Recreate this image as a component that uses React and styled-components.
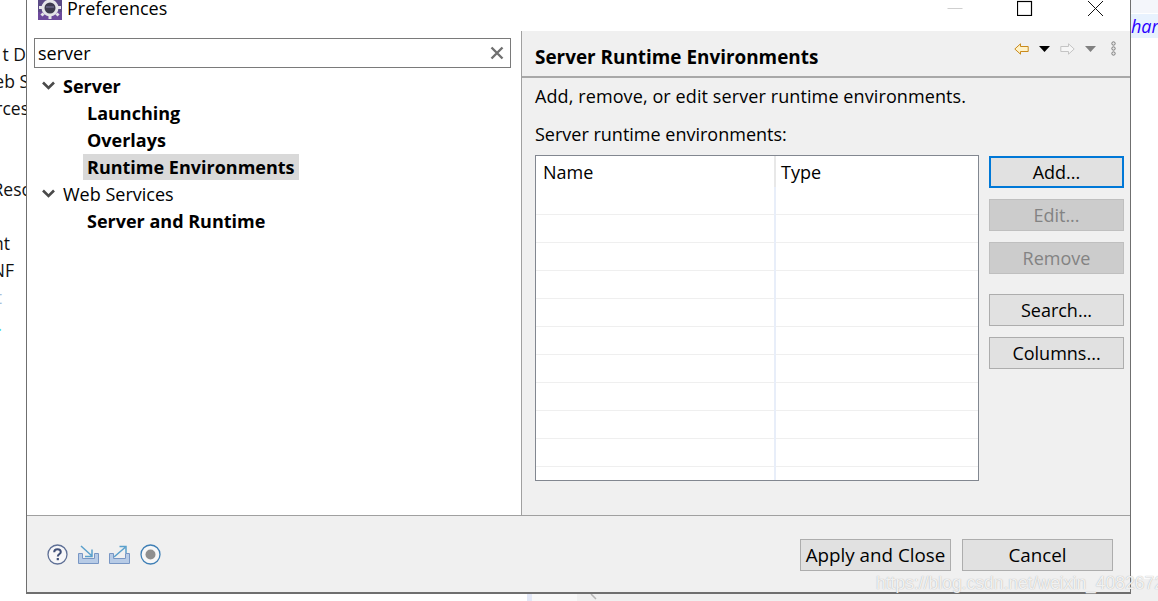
import React from "react";
import styled, { createGlobalStyle } from "styled-components";

const FONT = `"Open Sans", "Noto Sans", sans-serif`;

const GlobalStyle = createGlobalStyle`
  html, body { margin: 0; padding: 0; background: #fff; }
  body { font-family: ${FONT}; font-size: 18px; color: #000; overflow: hidden; }
`;

const Page = styled.div`
  position: relative;
  width: 1158px;
  height: 601px;
  overflow: hidden;
  display: flex;
  flex-direction: column;
`;

const Top = styled.div`
  display: flex;
  height: 594px;
`;

/* what is left visible of the IDE behind the dialog */
const LeftPeek = styled.div`
  width: 26px;
  padding-top: 41px;
  overflow: hidden;
  flex: none;
`;

const PeekLine = styled.div`
  height: 27px;
  line-height: 27px;
  display: flex;
  justify-content: flex-end;
  white-space: nowrap;
  font-size: 17.5px;
  color: ${(p) => p.$color || "#111"};
  margin-right: ${(p) => p.$cut || 0}px;
`;

const RightPeek = styled.div`
  width: 27px;
  flex: none;
  display: flex;
  flex-direction: column;
`;

const PeekTint = styled.div`
  height: 13px;
  background: #f4f6fb;
`;

const PeekCode = styled.div`
  margin-top: 1px;
  height: 24px;
  line-height: 24px;
  background: #e8f2fe;
  color: #2a00ff;
  font-style: italic;
  font-size: 18px;
  white-space: nowrap;
  overflow: hidden;
`;

const PeekGrey = styled.div`
  margin-top: auto;
  height: 15px;
  background: #f0f0f0;
`;

const BottomPeek = styled.div`
  height: 7px;
  display: flex;
`;

const PeekBlank = styled.div`
  width: 527px;
`;

const PeekRule = styled.div`
  width: 5px;
  background: #e3e8f7;
`;

const PeekGutter = styled.div`
  width: 45px;
  background: #f8f8f8;
`;

const PeekEditor = styled.div`
  flex: 1;
  background: #f0f0f0;
  padding-left: 10px;
  display: flex;
  align-items: flex-start;
`;

const Dialog = styled.div`
  width: 1105px;
  flex: none;
  display: flex;
  flex-direction: column;
  border-left: 1px solid #6f6f6f;
  border-right: 1px solid #6f6f6f;
  border-bottom: 2px solid #6f6f6f;
  box-sizing: border-box;
  background: #f0f0f0;
`;

const TitleBar = styled.div`
  height: 31px;
  flex: none;
  background: #fff;
  display: flex;
  align-items: flex-start;
  padding-left: 11px;
`;

const TitleText = styled.span`
  margin-left: 5px;
  font-size: 18px;
  line-height: 18px;
  margin-top: -1px;
`;

const WindowControls = styled.div`
  margin-left: auto;
  display: flex;
  align-items: flex-start;
  padding-right: 27px;
  gap: 54px;
`;

const Main = styled.div`
  flex: 1;
  display: flex;
  min-height: 0;
`;

const LeftPane = styled.div`
  width: 494px;
  flex: none;
  background: #fff;
  padding: 7px 10px 0 7px;
  box-sizing: border-box;
`;

const Sash = styled.div`
  width: 1px;
  flex: none;
  background: #a0a0a0;
`;

const FilterBox = styled.div`
  height: 30px;
  border: 1px solid #7a7a7a;
  box-sizing: border-box;
  display: flex;
  align-items: center;
  justify-content: space-between;
  padding: 0 6px 0 3px;
  font-size: 18px;
`;

const Tree = styled.div`
  margin-top: 4px;
`;

const TreeRow = styled.div`
  height: 27px;
  display: flex;
  align-items: center;
  padding-left: ${(p) => (p.$child ? 49 : 8)}px;
`;

const Chevron = styled.span`
  width: 21px;
  flex: none;
  display: flex;
`;

const TreeLabel = styled.span`
  font-weight: ${(p) => (p.$bold ? 700 : 400)};
  font-size: 18px;
  padding: 0 4px;
  height: 26px;
  line-height: 26px;
  background: ${(p) => (p.$selected ? "#d9d9d9" : "transparent")};
  margin-left: ${(p) => (p.$top ? -4 : 0)}px;
`;

const RightPane = styled.div`
  flex: 1;
  display: flex;
  flex-direction: column;
  min-width: 0;
`;

const PageHeader = styled.div`
  height: 47px;
  flex: none;
  box-sizing: border-box;
  border-bottom: 2px solid #a8a8a8;
  display: flex;
  align-items: center;
  padding: 6px 14px 0 13px;
`;

const PageTitle = styled.h2`
  margin: 0;
  font-size: 18.9px;
  font-weight: 700;
`;

const NavIcons = styled.div`
  margin-left: auto;
  display: flex;
  align-items: center;
  gap: 10px;
  margin-top: -16px;
`;

const MoreSlot = styled.span`
  display: flex;
  margin-left: 5px;
`;

const PageBody = styled.div`
  padding: 5px 6px 0 13px;
  font-size: 18px;
`;

const Line = styled.div`
  height: 27px;
  line-height: 27px;
  margin-bottom: ${(p) => p.$gap || 0}px;
  letter-spacing: ${(p) => (p.$wide ? "0.1px" : "normal")};
`;

const TableArea = styled.div`
  display: flex;
  gap: 10px;
  margin-top: 7px;
`;

const Table = styled.div`
  width: 444px;
  height: 326px;
  flex: none;
  box-sizing: border-box;
  border: 1px solid #828790;
  background: #fff;
  overflow: hidden;
`;

const HeaderRow = styled.div`
  height: 31px;
  display: flex;
`;

const HeaderCell = styled.div`
  width: ${(p) => p.$width}px;
  flex: none;
  box-sizing: border-box;
  padding-left: ${(p) => p.$pad}px;
  line-height: 33px;
  border-right: ${(p) => (p.$sep ? "2px solid #e8e8e8" : "0")};
`;

const EmptyRow = styled.div`
  height: 28px;
  box-sizing: border-box;
  display: flex;
  border-bottom: 1px solid #efefef;
`;

const EmptyCell = styled.div`
  width: 240px;
  flex: none;
  box-sizing: border-box;
  border-right: 2px solid #e8eef9;
  margin-bottom: -1px;
`;

const ButtonColumn = styled.div`
  display: flex;
  flex-direction: column;
  margin-top: 1px;
`;

const Button = styled.button`
  width: ${(p) => p.$width || 135}px;
  height: 32px;
  padding: 0;
  box-sizing: border-box;
  font-family: ${FONT};
  font-size: ${(p) => p.$font || 18}px;
  color: ${(p) => (p.disabled ? "#838383" : "#000")};
  background: ${(p) => (p.disabled ? "#cccccc" : "#e1e1e1")};
  border: ${(p) => (p.$focus ? "2px solid #0078d7" : p.disabled ? "1px solid #bfbfbf" : "1px solid #adadad")};
  margin-bottom: ${(p) => p.$gap || 11}px;
`;

const ButtonBar = styled.div`
  height: 77px;
  flex: none;
  box-sizing: border-box;
  border-top: 1px solid #a0a0a0;
  display: flex;
  align-items: flex-start;
  padding: 23px 17px 0 20px;
`;

const HelpIcons = styled.div`
  display: flex;
  align-items: center;
  gap: 10px;
  margin-top: 5px;
`;

const DialogButtons = styled.div`
  margin-left: auto;
  display: flex;
  gap: 11px;
`;

const Watermark = styled.div`
  position: absolute;
  left: 876px;
  top: 573px;
  font-family: "Liberation Sans", sans-serif;
  font-size: 17.5px;
  line-height: 20px;
  white-space: nowrap;
  color: rgba(255, 255, 255, 0.85);
  text-shadow: 0 0 1px rgba(140, 140, 140, 0.8);
`;

const GearIcon = () => (
  <svg width="24" height="20" viewBox="0 0 24 20">
    <rect width="24" height="20" fill="#5b4a86" />
    <rect y="12" width="24" height="8" fill="#6d4a9c" />
    <circle cx="12" cy="8" r="8.5" fill="#e4e4e8" />
    <g fill="#e4e4e8">
      <rect x="10.5" y="15" width="3" height="4" />
      <rect x="3" y="13" width="3" height="3" transform="rotate(-45 4.5 14.5)" />
      <rect x="18" y="13" width="3" height="3" transform="rotate(45 19.5 14.5)" />
      <rect x="1" y="6" width="3" height="3" />
      <rect x="20" y="6" width="3" height="3" />
    </g>
    <circle cx="12" cy="8" r="5.5" fill="#3c3a4e" />
    <rect x="8" y="6" width="8" height="2" fill="#5d5a78" />
  </svg>
);

const MinIcon = () => (
  <svg width="16" height="16" viewBox="0 0 16 16">
    <path d="M0.5 8.5H15.5" stroke="#cfcfcf" strokeWidth="1" />
  </svg>
);

const MaxIcon = () => (
  <svg width="16" height="16" viewBox="0 0 16 16">
    <rect x="0.5" y="1.5" width="14" height="14" fill="none" stroke="#000" strokeWidth="1.2" />
  </svg>
);

const CloseIcon = () => (
  <svg width="16" height="16" viewBox="0 0 16 16">
    <path d="M1 1L16 16M16 1L1 16" stroke="#111" strokeWidth="1" />
  </svg>
);

const ClearIcon = () => (
  <svg width="14" height="14" viewBox="0 0 14 14">
    <path d="M1.5 1.5L12.5 12.5M12.5 1.5L1.5 12.5" stroke="#707070" strokeWidth="2.4" />
  </svg>
);

const ChevronIcon = () => (
  <svg width="13" height="9" viewBox="0 0 13 9">
    <path d="M1 1.5L6.5 7L12 1.5" fill="none" stroke="#4a4a4a" strokeWidth="2.6" />
  </svg>
);

const BackIcon = () => (
  <svg width="15" height="12" viewBox="0 0 15 12">
    <path d="M6.5 0.8L0.8 6L6.5 11.2V8.5H14.2V3.5H6.5Z" fill="#fff2c8" stroke="#c98a1c" strokeWidth="1" />
  </svg>
);

const ForwardIcon = () => (
  <svg width="15" height="12" viewBox="0 0 15 12">
    <path d="M8.5 0.8L14.2 6L8.5 11.2V8.5H0.8V3.5H8.5Z" fill="#f6f6f6" stroke="#c4c4c4" strokeWidth="1" />
  </svg>
);

const DropIcon = ({ color }) => (
  <svg width="11" height="6" viewBox="0 0 11 6">
    <path d="M0 0H11L5.5 6Z" fill={color} />
  </svg>
);

const DotsIcon = () => (
  <svg width="5" height="15" viewBox="0 0 5 15">
    <g fill="#e6e6e6" stroke="#7d7d7d" strokeWidth="1">
      <circle cx="2.5" cy="2.5" r="1.7" />
      <circle cx="2.5" cy="7.5" r="1.7" />
      <circle cx="2.5" cy="12.5" r="1.7" />
    </g>
  </svg>
);

const HelpIcon = () => (
  <svg width="21" height="21" viewBox="0 0 21 21">
    <circle cx="10.5" cy="10.5" r="9.5" fill="#f7f7f9" stroke="#5f7096" strokeWidth="1.3" />
    <path d="M7.2 8.2C7.2 6.2 8.7 5.2 10.5 5.2C12.4 5.2 13.8 6.3 13.8 8C13.8 10 10.8 10.2 10.8 12.6" fill="none" stroke="#3f4f78" strokeWidth="2" />
    <rect x="9.7" y="14" width="2.2" height="2.2" fill="#3f4f78" />
  </svg>
);

const TrayIcon = ({ out }) => (
  <svg width="21" height="19" viewBox="0 0 21 19">
    <path d="M0.5 8.5H4.5V13.5H16.5V8.5H20.5V18.5H0.5Z" fill="#b7cbe6" stroke="#7896c4" strokeWidth="1" />
    {out ? (
      <path d="M5 12L16 2.5M10.5 1.5H17V8" fill="none" stroke="#5aa0cc" strokeWidth="1.5" />
    ) : (
      <path d="M3 1L14 11M14 4.5V11.5H7" fill="none" stroke="#5aa0cc" strokeWidth="1.5" />
    )}
  </svg>
);

const RecordIcon = () => (
  <svg width="21" height="21" viewBox="0 0 21 21">
    <circle cx="10.5" cy="10.5" r="9.5" fill="#f7f7f7" stroke="#3f7fb5" strokeWidth="1.3" />
    <circle cx="10.5" cy="10.5" r="5" fill="#8f8f8f" />
  </svg>
);

const rows = Array.from({ length: 11 });

export default function App() {
  return (
    <Page>
      <GlobalStyle />
      <Top>
        <LeftPeek>
          <PeekLine>t D</PeekLine>
          <PeekLine $cut={-3}>eb S</PeekLine>
          <PeekLine $cut={-3}>rces</PeekLine>
          <PeekLine />
          <PeekLine />
          <PeekLine $cut={-6}>Reso</PeekLine>
          <PeekLine />
          <PeekLine $cut={16}>nt</PeekLine>
          <PeekLine $cut={12}>NF</PeekLine>
          <PeekLine $cut={24} $color="#a9c0d8">t</PeekLine>
          <PeekLine $cut={24} $color="#4fd8e8">.</PeekLine>
        </LeftPeek>
        <Dialog>
          <TitleBar>
            <GearIcon />
            <TitleText>Preferences</TitleText>
            <WindowControls>
              <MinIcon />
              <MaxIcon />
              <CloseIcon />
            </WindowControls>
          </TitleBar>
          <Main>
            <LeftPane>
              <FilterBox>
                server
                <ClearIcon />
              </FilterBox>
              <Tree>
                <TreeRow>
                  <Chevron><ChevronIcon /></Chevron>
                  <TreeLabel $bold $top>Server</TreeLabel>
                </TreeRow>
                <TreeRow $child><TreeLabel $bold>Launching</TreeLabel></TreeRow>
                <TreeRow $child><TreeLabel $bold>Overlays</TreeLabel></TreeRow>
                <TreeRow $child><TreeLabel $bold $selected>Runtime Environments</TreeLabel></TreeRow>
                <TreeRow>
                  <Chevron><ChevronIcon /></Chevron>
                  <TreeLabel $top>Web Services</TreeLabel>
                </TreeRow>
                <TreeRow $child><TreeLabel $bold>Server and Runtime</TreeLabel></TreeRow>
              </Tree>
            </LeftPane>
            <Sash />
            <RightPane>
              <PageHeader>
                <PageTitle>Server Runtime Environments</PageTitle>
                <NavIcons>
                  <BackIcon />
                  <DropIcon color="#000" />
                  <ForwardIcon />
                  <DropIcon color="#808080" />
                  <MoreSlot><DotsIcon /></MoreSlot>
                </NavIcons>
              </PageHeader>
              <PageBody>
                <Line $gap={11} $wide>Add, remove, or edit server runtime environments.</Line>
                <Line>Server runtime environments:</Line>
                <TableArea>
                  <Table>
                    <HeaderRow>
                      <HeaderCell $width={240} $pad={7} $sep>Name</HeaderCell>
                      <HeaderCell $width={200} $pad={5}>Type</HeaderCell>
                    </HeaderRow>
                    {rows.map((_, i) => (
                      <EmptyRow key={i}><EmptyCell /></EmptyRow>
                    ))}
                  </Table>
                  <ButtonColumn>
                    <Button $focus>Add...</Button>
                    <Button disabled>Edit...</Button>
                    <Button disabled $gap={20}>Remove</Button>
                    <Button>Search...</Button>
                    <Button>Columns...</Button>
                  </ButtonColumn>
                </TableArea>
              </PageBody>
            </RightPane>
          </Main>
          <ButtonBar>
            <HelpIcons>
              <HelpIcon />
              <TrayIcon />
              <TrayIcon out />
              <RecordIcon />
            </HelpIcons>
            <DialogButtons>
              <Button $width={151} $font={18.8}>Apply and Close</Button>
              <Button $width={151} $font={18.8}>Cancel</Button>
            </DialogButtons>
          </ButtonBar>
        </Dialog>
        <RightPeek>
          <PeekTint />
          <PeekCode>har</PeekCode>
          <PeekGrey />
        </RightPeek>
      </Top>
      <BottomPeek>
        <PeekBlank />
        <PeekRule />
        <PeekGutter />
        <PeekEditor>
          <svg width="12" height="7" viewBox="0 0 12 7">
            <path d="M4 0L9 5" stroke="#b5b5b5" strokeWidth="1.5" fill="none" />
          </svg>
        </PeekEditor>
      </BottomPeek>
      <Watermark>https://blog.csdn.net/weixin_40826724</Watermark>
    </Page>
  );
}
